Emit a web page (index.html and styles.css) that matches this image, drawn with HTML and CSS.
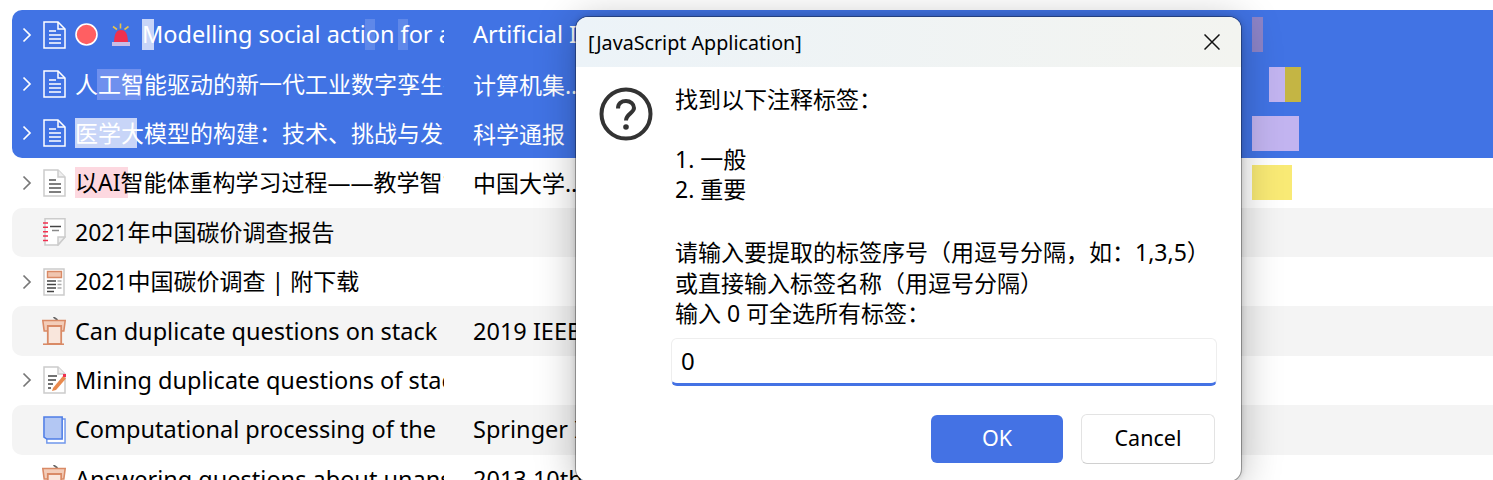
FILE: index.html
```html
<!DOCTYPE html>
<html lang="zh">
<head>
<meta charset="utf-8">
<title>JavaScript Application</title>
<link rel="stylesheet" href="styles.css">
</head>
<body>
<svg class="defs" width="0" height="0">
  <symbol id="doc" viewBox="0 0 23 28">
    <path d="M1 1H15L22 8V27H1Z" fill="none" stroke="currentColor" stroke-width="1.5"/>
    <path d="M15 1V8H22" fill="none" stroke="currentColor" stroke-width="1.5"/>
    <path d="M6 10H13M6 14H18M6 18H18M6 22H18" stroke="currentColor" stroke-width="1.5"/>
  </symbol>
  <symbol id="podium" viewBox="0 0 24 28">
    <path d="M11.500 0L15.500 3" stroke="#666" stroke-width="1.600"/>
    <path d="M.8 3.500H23.200L21.800 14H2.200Z" fill="#f3cdb9" stroke="#d98a66" stroke-width="1.600"/>
    <path d="M5.800 9H19.200V27H5.800Z" fill="#f9e6dc" stroke="#d98a66" stroke-width="1.800"/>
    <path d="M1 27.200H22" stroke="#d98a66" stroke-width="1.600"/>
  </symbol>
</svg>
<main class="list">
  <div class="group">
    <div class="row sel">
      <svg class="chev" viewBox="0 0 10 16"><path d="M1.500 1.500L8 8L1.500 14.500"/></svg>
      <svg class="icon"><use href="#doc"/></svg>
      <svg class="dot" viewBox="0 0 23 23"><circle cx="11.500" cy="11.500" r="10.500" fill="#ff5f62" stroke="#fff" stroke-width="1.600"/></svg>
      <svg class="alarm" viewBox="0 0 20 24">
        <path d="M9.500 .5V5.500M2 3.500L6 6.500M17.500 3.500L13.500 6.500" stroke="#e8c24a" stroke-width="1.600"/>
        <path d="M3 19C3.500 10 5.500 7 10 7S16.500 10 17 19Z" fill="#f0304f"/>
        <path d="M1 19H19V23H1Z" fill="#c7bde6"/>
      </svg>
      <span class="title first"><i class="mark m-m"></i><i class="mark m-a"></i><i class="mark m-b"></i><b class="lat">Modelling social action for analysis of</b></span>
      <span class="pub lat">Artificial Intelligence Review</span>
      <div class="notes"><i class="bar purple-dim w11"></i></div>
    </div>
    <div class="row sel">
      <svg class="chev" viewBox="0 0 10 16"><path d="M1.500 1.500L8 8L1.500 14.500"/></svg>
      <svg class="icon"><use href="#doc"/></svg>
      <span class="title"><i class="mark m-gong"></i><b>人工智能驱动的新一代工业数字孪生技术</b></span>
      <span class="pub">计算机集成制造系统</span>
      <div class="notes shift"><i class="bar lilac w16"></i><i class="bar olive w16"></i></div>
    </div>
    <div class="row sel">
      <svg class="chev" viewBox="0 0 10 16"><path d="M1.500 1.500L8 8L1.500 14.500"/></svg>
      <svg class="icon"><use href="#doc"/></svg>
      <span class="title"><i class="mark m-yi"></i><b>医学大模型的构建：技术、挑战与发展</b></span>
      <span class="pub">科学通报</span>
      <div class="notes"><i class="bar lilac w47"></i></div>
    </div>
  </div>
  <div class="row">
    <svg class="chev" viewBox="0 0 10 16"><path d="M1.500 1.500L8 8L1.500 14.500"/></svg>
    <svg class="icon plain" viewBox="0 0 23 28">
      <path d="M1 1H15L22 8V27H1Z" fill="#fff" stroke="#ccc" stroke-width="1.500"/>
      <path d="M15 1V8H22" fill="#eee" stroke="#ccc" stroke-width="1.500"/>
      <path d="M6 11H13M6 15H18M6 19H18M6 23H18" stroke="#555" stroke-width="1.500"/>
    </svg>
    <span class="title"><i class="mark m-pink"></i><b>以AI智能体重构学习过程——教学智能体</b></span>
    <span class="pub">中国大学教学研究</span>
    <div class="notes"><i class="bar yellow w40"></i></div>
  </div>
  <div class="row alt">
    <span class="nochev"></span>
    <svg class="icon plain" viewBox="0 0 23 28">
      <path d="M2 .8H22V19L15 27H2Z" fill="#fff" stroke="#ccc" stroke-width="1.500"/>
      <path d="M22 19H15V27Z" fill="#eee" stroke="#ccc" stroke-width="1.500"/>
      <path d="M0 5H5M0 9.300H5M0 13.800H5M0 18H5M0 22.500H5" stroke="#f0304f" stroke-width="1.600"/>
      <path d="M7 8.500H18" stroke="#444" stroke-width="1.500"/>
      <path d="M9 12.500H16" stroke="#888" stroke-width="1.500"/>
    </svg>
    <span class="title"><b>2021年中国碳价调查报告</b></span>
  </div>
  <div class="row">
    <svg class="chev" viewBox="0 0 10 16"><path d="M1.500 1.500L8 8L1.500 14.500"/></svg>
    <svg class="icon plain" viewBox="0 0 23 28">
      <path d="M1 1H21V27H1Z" fill="#fff" stroke="#ccc" stroke-width="1.500"/>
      <path d="M4.500 3.500H18.500V9.500H4.500Z" fill="#f0c6b0" stroke="#d98a66" stroke-width="1.400"/>
      <path d="M4 13H13M4 16.500H13M4 20H13M4 23.500H11" stroke="#444" stroke-width="1.500"/>
      <path d="M14.500 13H18.500M14.500 16.500H18.500M14.500 20H18.500" stroke="#aaa" stroke-width="1.500"/>
    </svg>
    <span class="title"><b>2021中国碳价调查 | 附下载</b></span>
  </div>
  <div class="row alt">
    <span class="nochev"></span>
    <svg class="icon pod"><use href="#podium"/></svg>
    <span class="title"><b class="lat">Can duplicate questions on stack</b></span>
    <span class="pub lat">2019 IEEE International</span>
  </div>
  <div class="row">
    <svg class="chev" viewBox="0 0 10 16"><path d="M1.500 1.500L8 8L1.500 14.500"/></svg>
    <svg class="icon plain" viewBox="0 0 23 28">
      <path d="M1 1H15L22 8V27H1Z" fill="#fff" stroke="#ccc" stroke-width="1.500"/>
      <path d="M15 1V8H22" fill="#eee" stroke="#ccc" stroke-width="1.500"/>
      <path d="M5 10H14M5 14H13M5 18H10M5 22H8" stroke="#444" stroke-width="1.500"/>
      <path d="M10 22L20 10L23 12.500L13 24L9 25Z" fill="#e98a4e"/>
      <path d="M20 8H24V11H20Z" fill="#f0304f"/>
    </svg>
    <span class="title"><b class="lat">Mining duplicate questions of stack overflow</b></span>
  </div>
  <div class="row alt">
    <span class="nochev"></span>
    <svg class="icon plain" viewBox="0 0 24 29">
      <path d="M4 3H23V28H4Z" fill="#fff" stroke="#6f96ec" stroke-width="1.500"/>
      <path d="M1 1H20V24H4L1 22Z" fill="#b3c7f3" stroke="#4f7de6" stroke-width="1.600"/>
    </svg>
    <span class="title"><b class="lat">Computational processing of the</b></span>
    <span class="pub lat">Springer International</span>
  </div>
  <div class="row">
    <span class="nochev"></span>
    <svg class="icon pod"><use href="#podium"/></svg>
    <span class="title"><b class="lat">Answering questions about unanswered</b></span>
    <span class="pub lat">2013 10th Working</span>
  </div>
</main>

<section class="dialog">
  <header class="bar-top">
    <span class="caption">[JavaScript Application]</span>
    <svg class="close" viewBox="0 0 16 16"><path d="M.500.500L15.500 15.500M15.500.500L.500 15.500"/></svg>
  </header>
  <div class="body">
    <svg class="ask" viewBox="0 0 54 54">
      <circle cx="27" cy="27" r="24.500" fill="none" stroke="#333" stroke-width="4"/>
      <path d="M19 21.500C19 16.500 22.500 14 27 14S35 17 35 21C35 26 27 27 27 33.500" fill="none" stroke="#333" stroke-width="4"/>
      <circle cx="27" cy="40" r="2.800" fill="#333"/>
    </svg>
    <div class="content">
      <p class="msg">找到以下注释标签：<br><br>1. 一般<br>2. 重要</p>
      <p class="msg second">请输入要提取的标签序号（用逗号分隔，如：1,3,5）<br>或直接输入标签名称（用逗号分隔）<br>输入 0 可全选所有标签：</p>
      <div class="field">0</div>
    </div>
  </div>
  <footer class="actions">
    <span class="btn primary">OK</span>
    <span class="btn">Cancel</span>
  </footer>
</section>
</body>
</html>
```
FILE: styles.css
```css
* { box-sizing: border-box; }
html, body { margin: 0; height: 480px; overflow: hidden; background: #fff; }
body { font-family: "Noto Sans", "Noto Sans CJK SC", sans-serif; font-size: 23px; color: #000; position: relative; }
.defs { position: absolute; }
.list { padding: 10px 0 0 12px; }
.group { background: #4173e4; border-radius: 10px 0 0 10px; color: #fff; }
.row { display: flex; align-items: center; height: 49.4px; }
.alt { background: #f4f4f4; border-radius: 10px 0 0 10px; }
.chev { flex: none; width: 10px; height: 16px; margin: 0 11px 0 10px; fill: none; stroke: #777; stroke-width: 1.7; }
.sel .chev { stroke: #fff; }
.nochev { flex: none; width: 31px; }
.icon { flex: none; width: 23px; height: 28px; color: #fff; }
.icon.pod { width: 24px; margin: 0 0 0 -1px; }
.dot { flex: none; width: 23px; height: 23px; margin-left: 9px; }
.alarm { flex: none; width: 20px; height: 24px; margin: 0 0 0 13px; }
.title { flex: none; width: 369px; margin-left: 9px; padding-bottom: 1px; position: relative; overflow: hidden; white-space: nowrap; line-height: 32px; }
.title.first { width: 302px; margin-left: 11px; }
.title b { position: relative; font-weight: 400; }
.lat { font-size: 23.5px; }
.mark { position: absolute; top: 1px; height: 31px; }
.m-m { left: 0; width: 12px; background: #c8d5f8; }
.m-a { left: 223px; width: 10px; background: #5f88e9; }
.m-b { left: 256px; width: 10px; background: #5f88e9; }
.m-gong { left: 22px; width: 44px; background: #6f90ee; }
.m-yi { left: 0; width: 62px; height: 30px; background: #c8d5f8; }
.m-pink { left: 0; width: 53px; background: #fdd8e0; }
.pub { flex: none; width: 125px; margin-left: 29px; padding-bottom: 1px; overflow: hidden; white-space: nowrap; text-overflow: ellipsis; }
.pub.lat { width: 135px; }
.notes { display: flex; position: absolute; left: 1252px; }
.notes.shift { left: 1269px; }
.bar { display: block; height: 35px; }
.w11 { width: 11px; } .w16 { width: 16px; } .w40 { width: 40px; } .w47 { width: 47px; }
.purple-dim { background: #8d84c8; }
.lilac { background: #c2b4f0; }
.olive { background: #c4b544; }
.yellow { background: #f9ea75; }

.dialog { position: absolute; left: 576px; top: 17px; width: 665px; height: 464px; background: #fff; border-radius: 12px; box-shadow: 0 0 0 1px rgba(0,0,0,.3), 0 0 6px rgba(0,0,0,.2), 0 4px 40px rgba(0,0,0,.28); display: flex; flex-direction: column; }
.bar-top { flex: none; height: 50px; padding: 0 21px 0 12px; display: flex; align-items: center; justify-content: space-between; background: linear-gradient(90deg, #ecf3f8, #f3f4f0); border-radius: 12px 12px 0 0; }
.caption { font-size: 19.7px; }
.close { width: 16px; height: 16px; fill: none; stroke: #111; stroke-width: 1.500; }
.body { flex: none; display: flex; padding: 17px 24px 0 23px; }
.ask { flex: none; width: 54px; height: 54px; margin-top: 3px; }
.content { width: 546px; margin-left: 18px; }
.msg { margin: 0 0 0 4px; line-height: 30px; white-space: nowrap; }
.msg.second { margin-top: 33px; line-height: 30.500px; }
.field { height: 48px; margin-top: 9.500px; padding-left: 9px; border: 1px solid #eee; border-bottom: 3px solid #4472e4; border-radius: 6px; line-height: 44px; font-size: 24px; }
.actions { display: flex; justify-content: flex-end; align-items: center; gap: 18px; padding: 28px 26px 0 0; }
.btn { width: 134px; height: 50px; padding-bottom: 3px; border: 1px solid #e3e3e3; border-bottom-color: #d0d0d0; border-radius: 6px; display: flex; align-items: center; justify-content: center; font-size: 21.500px; }
.btn.primary { width: 132px; height: 48px; background: #4472e4; border: 0; color: #fff; }
```
